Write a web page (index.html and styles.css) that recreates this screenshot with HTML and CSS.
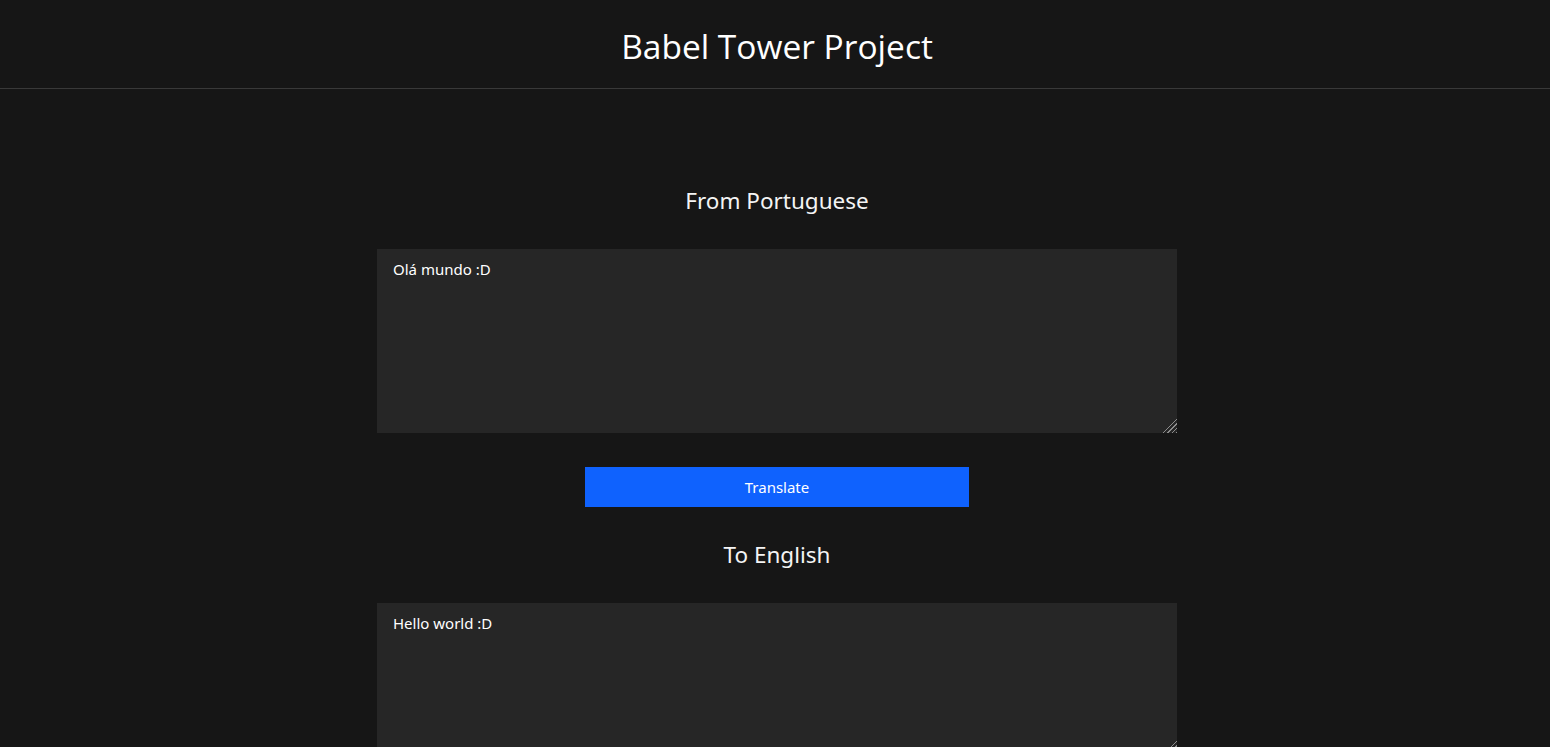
FILE: index.html
```html
<!DOCTYPE html>
<html lang="en">
<head>
<meta charset="utf-8">
<title>Babel Tower Project</title>
<link rel="stylesheet" href="styles.css">
</head>
<body>
<header class="header">
  <h1 class="title">Babel Tower Project</h1>
</header>
<main class="main">
  <section class="block">
    <h2 class="label">From Portuguese</h2>
    <textarea class="area area-input">Olá mundo :D</textarea>
  </section>
  <button class="translate" type="button">Translate</button>
  <section class="block">
    <h2 class="label">To English</h2>
    <textarea class="area area-output">Hello world :D</textarea>
  </section>
</main>
</body>
</html>
```

FILE: styles.css
```css
html, body {
  margin: 0;
  padding: 0;
  background: #161616;
  color: #f4f4f4;
  font-family: "Noto Sans", "Open Sans", sans-serif;
}

body {
  padding-left: 4px;
}

.header {
  height: 88px;
  margin-left: -4px;
  padding-left: 4px;
  border-bottom: 1px solid #393939;
  display: flex;
  align-items: center;
  justify-content: center;
}

.title {
  margin: 0;
  font-family: "Open Sans", "Noto Sans", sans-serif;
  font-weight: 400;
  font-size: 33.5px;
  line-height: 44px;
  color: #ffffff;
  padding-top: 4px;
}

.main {
  display: flex;
  flex-direction: column;
  align-items: center;
  padding-top: 96px;
}

.block {
  display: flex;
  flex-direction: column;
  align-items: center;
  gap: 32px;
}

.label {
  margin: 0;
  font-weight: 400;
  font-size: 22.5px;
  line-height: 32px;
  color: #f4f4f4;
}

.area {
  box-sizing: border-box;
  width: 800px;
  height: 184px;
  margin: 0;
  padding: 10px 16px 12px;
  background: #262626;
  color: #ffffff;
  border: none;
  outline: none;
  font-family: "Noto Sans", sans-serif;
  font-size: 15px;
  line-height: 20px;
  color-scheme: dark;
}

.area::-webkit-resizer {
  background:
    linear-gradient(to bottom right, #262626 50%, transparent 50%),
    repeating-linear-gradient(135deg, #262626 0 2px, #8d8d8d 2px 3px);
}

.area-output {
  height: 152px;
}

.translate {
  margin: 34px 0 32px;
  width: 384px;
  height: 40px;
  background: #0f62fe;
  color: #ffffff;
  border: none;
  font-family: "Noto Sans", sans-serif;
  font-size: 15px;
  cursor: pointer;
}
```
